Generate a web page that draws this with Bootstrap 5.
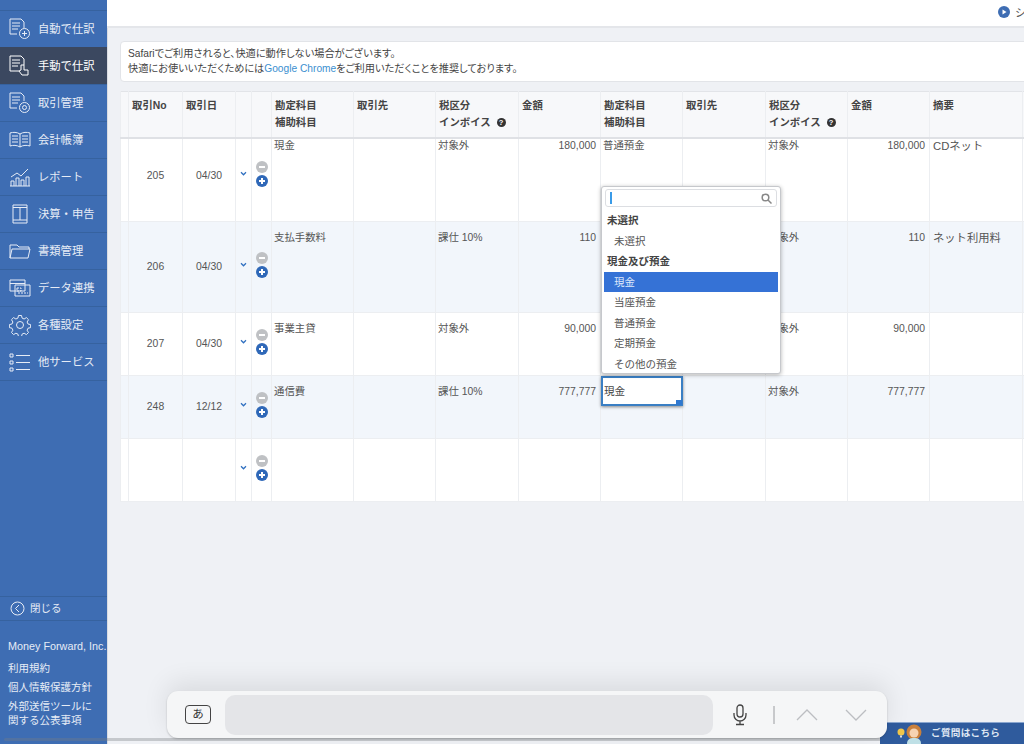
<!DOCTYPE html>
<html lang="ja">
<head>
<meta charset="utf-8">
<title>手動で仕訳</title>
<link href="https://cdn.jsdelivr.net/npm/bootstrap@5.3.0/dist/css/bootstrap.min.css" rel="stylesheet">
<style>
html,body{height:744px;overflow:hidden}
body{font-family:"Liberation Sans","Noto Sans CJK JP",sans-serif;font-size:11px;color:#555;background:#eff1f5}
.shell{height:744px;position:relative;overflow:hidden}
.side{width:107px;flex:none;background:#3e6db3;color:#e6ecf6;box-shadow:1px 0 0 #d9dce2}
.side-top{padding-top:10px}
.side-item{height:37px;padding-left:9px;gap:7px;font-size:11.3px;border-top:1px solid #36629f;white-space:nowrap;color:#e6ecf6}
.side-item:last-child{border-bottom:1px solid #36629f;height:38px}
.side-item.on{background:#3b4860;color:#fff;border-top-color:#3b4860}
.side-item svg{width:22px;height:22px;flex:none}
.side-close{height:25px;border-top:1px solid #36629f;border-bottom:1px solid #36629f;padding-left:10px;gap:5px;font-size:10.5px;margin-bottom:18px}
.side-foot{padding:0 0 17px 8px;font-size:10.5px;line-height:14px;white-space:nowrap}
.side-foot div{margin-bottom:5px}
.side-foot .mf{margin-bottom:8px;font-size:10.8px}
.wrap{min-width:0;overflow:hidden}
.topbar{height:28px;background:#fff;border-bottom:2px solid #e4e6ea;padding-left:891px;gap:5px;white-space:nowrap}
.topbar svg{width:12px;height:12px;flex:none;margin-top:-2px}
.notice{width:960px;height:41px;margin:13px 0 9px 13px;background:#fff;border:1px solid #e2e4e8;border-radius:4px;padding:5px 7px;font-size:10.2px;line-height:14.5px;color:#444;white-space:nowrap;font-feature-settings:"palt"}
.notice a{color:#3b8fd0;text-decoration:none}
.grid-box{margin-left:13px;width:960px;overflow:hidden}
.jtable{table-layout:fixed;width:930px;margin:0;border-collapse:collapse;background:#fff;font-size:10.4px;color:#555;border-top:1px solid #e2e4e8;border-left:1px solid #e6e8ec}
.jtable th,.jtable td{border:1px solid #eceef1;border-top:0;padding:0 3px;background:transparent;color:inherit;box-shadow:none;vertical-align:top;white-space:nowrap}
.jtable thead tr{height:46px;background:#f7f8fa}
.jtable th{padding:6px 3px;line-height:16.5px;font-weight:700;color:#444;border-bottom:2px solid #dfe1e5}
.rowa{height:83px}.rowb{height:91px}.rowc{height:63px}
.tint{background:#f2f6fb}
.jtable td{line-height:14px;padding-top:9px}
.jtable .rowa td{padding-top:0}
.jtable td.mid{vertical-align:middle;text-align:center;padding:0}
.jtable .rowa td.mid{padding-bottom:8px}
.jtable td.num{text-align:right;padding-right:4px}
.jtable td.big{font-size:11.3px;padding-left:3px}
.jtable td.lbl{padding-left:2px}
.jtable td.ctrl{vertical-align:middle;padding:0 0 4px;text-align:center}
.jtable .rowa td.ctrl{padding:0 0 12px}
.ctrl svg{width:12px;height:12px;display:block;margin:2px auto}
.ctrl svg.chev{width:7px;height:5px}
.q{display:inline-block;width:9px;height:9px;border-radius:50%;background:#333;color:#fff;font-size:7.5px;line-height:9px;text-align:center;margin-left:3px;vertical-align:1px}
.c0{width:8px}.c1{width:54px}.c2{width:53px}.c3{width:16px}.c4{width:20px}.c5,.c6,.c8,.c9,.c11,.c12{width:82px}.c7,.c10{width:83px}.c13{width:93px}.c14{width:28px}
.cell-edit{position:absolute;left:601px;top:376px;width:82px;height:30px;background:#fff;border:2px solid #3a7fc4;box-shadow:0 1px 3px rgba(0,0,0,.45);padding-left:1px;line-height:26px;font-size:10.6px;color:#444}
.cell-edit::after{content:"";position:absolute;right:-1px;bottom:-1px;width:6px;height:5px;background:#2f78d0}
.picker{position:absolute;left:601px;top:186px;width:180px;height:188px;overflow:hidden;background:#fff;border:1px solid #c6c8cc;border-radius:3px;box-shadow:0 1px 4px rgba(0,0,0,.3);padding:2px;font-size:10.5px;color:#555}
.pick-search{height:18px;margin:0 1px 3px;border:1px solid #dcdee2;border-radius:3px;padding:0 4px}
.caret{width:2px;height:12px;background:#3a9be8}
.pick-search svg{width:11px;height:11px}
.pick-h{height:20.5px;line-height:21px;font-weight:700;color:#444;padding-left:3px}
.pick-o{height:20.5px;line-height:20px;padding-left:10px}
.pick-o.sel{background:#3572d6;color:#dfe9fb}
.kbbar{position:absolute;left:167px;top:691px;width:720px;height:47px;background:#f5f6f7;border-radius:11px;box-shadow:0 -8px 26px rgba(0,0,0,.09),0 1px 2px rgba(0,0,0,.2);padding:4px 0}
.kana{width:26px;height:19px;margin:0 14px 0 18px;border:1.5px solid #444;border-radius:4px;font-size:11.5px;line-height:16px;text-align:center;color:#333}
.kb-input{width:488px;height:40px;background:#e4e5e8;border-radius:10px}
.kb-icons{gap:0;padding-left:18px}
.kb-icons svg{flex:none}
.gap-up{margin-left:21px}
.gap-down{margin-left:27px}
.help{position:absolute;left:880px;top:722px;width:144px;height:22px;background:#2f5b9d;border-top:1px solid #8aa6cf;border-radius:5px 0 0 0;color:#dfe7f3;font-size:9.6px;font-weight:700;letter-spacing:.3px;padding-left:16px;gap:5px;white-space:nowrap}
.scrollline{position:absolute;left:4px;top:738px;width:880px;height:3px;background:rgba(120,122,128,.35);border-radius:2px}
</style>
</head>
<body>
<div class="shell d-flex">
  <aside class="side d-flex flex-column">
    <div class="side-top">
      <div class="side-item d-flex align-items-center"><svg viewBox="0 0 22 22" fill="none" stroke="currentColor" stroke-width="1"><path d="M1 1h11l3 3v6M1 1v15h7M3 5h8M3 8h8M3 11h6"/><circle cx="15.500" cy="15.500" r="5"/><path d="M15.500 13v5M13 15.500h5"/></svg><span>自動で仕訳</span></div>
      <div class="side-item on d-flex align-items-center"><svg viewBox="0 0 22 22" fill="none" stroke="currentColor" stroke-width="1"><path d="M1 1h11l3 3v6M1 1v15h9M3 5h8M3 8h8M3 11h6"/><path d="M15 10v5h4v5h-6l-3-4 2-1v-5z" fill="#3b4860"/></svg><span>手動で仕訳</span></div>
      <div class="side-item d-flex align-items-center"><svg viewBox="0 0 22 22" fill="none" stroke="currentColor" stroke-width="1"><path d="M1 1h11l3 3v5M1 1v15h7M3 5h8M3 8h8M3 11h6"/><circle cx="15.500" cy="15.500" r="5"/><circle cx="15.500" cy="15.500" r="2"/></svg><span>取引管理</span></div>
      <div class="side-item d-flex align-items-center"><svg viewBox="0 0 22 22" fill="none" stroke="currentColor" stroke-width="1"><path d="M11 5C8 3 4 3 1 4v13c3-1 7-1 10 1 3-2 7-2 10-1V4c-3-1-7-1-10 1zM11 5v13M3 7h6M3 10h6M3 13h6M13 7h6M13 10h6M13 13h6"/></svg><span>会計帳簿</span></div>
      <div class="side-item d-flex align-items-center"><svg viewBox="0 0 22 22" fill="none" stroke="currentColor" stroke-width="1"><path d="M1 20h20M2 20v-5h3v5M7 20v-8h3v8M12 20v-6h3v6M17 20v-9h3v9M2 11l6-4 4 3 7-7"/></svg><span>レポート</span></div>
      <div class="side-item d-flex align-items-center"><svg viewBox="0 0 22 22" fill="none" stroke="currentColor" stroke-width="1"><path d="M4 2h14v18H4zM4 4.500h14M4 17h14M11 4.500V17"/></svg><span>決算・申告</span></div>
      <div class="side-item d-flex align-items-center"><svg viewBox="0 0 22 22" fill="none" stroke="currentColor" stroke-width="1"><path d="M1 18V5h7l2 2h10v2M1 18l2-9h18l-2 9z"/></svg><span>書類管理</span></div>
      <div class="side-item d-flex align-items-center"><svg viewBox="0 0 22 22" fill="none" stroke="currentColor" stroke-width="1"><path d="M1 3h15v11H1zM1 6.500h15M6 8h15v11H6z"/><path d="M8 11h4v3H8zM9 16h10" stroke-dasharray="2 1"/></svg><span>データ連携</span></div>
      <div class="side-item d-flex align-items-center"><svg viewBox="0 0 22 22" fill="none" stroke="currentColor" stroke-width="1"><path d="M9.500 1.500h3l.6 2.600 2 .9 2.300-1.400 2.100 2.100-1.400 2.300.9 2 2.600.6v3l-2.600.6-.9 2 1.400 2.300-2.100 2.100-2.300-1.400-2 .9-.6 2.600h-3l-.6-2.600-2-.9-2.300 1.400-2.100-2.100 1.400-2.300-.9-2-2.600-.6v-3l2.600-.6.9-2-1.400-2.300 2.100-2.100 2.300 1.400 2-.9z"/><circle cx="11" cy="11" r="3.500"/></svg><span>各種設定</span></div>
      <div class="side-item d-flex align-items-center"><svg viewBox="0 0 22 22" fill="none" stroke="currentColor" stroke-width="1"><path d="M1 3h3v3H1zM1 10h3v3H1zM1 17h3v3H1zM7 4.500h14M7 11.500h14M7 18.500h14"/></svg><span>他サービス</span></div>
    </div>
    <div class="mt-auto">
      <div class="side-close d-flex align-items-center"><svg width="15" height="15" viewBox="0 0 15 15" fill="none" stroke="currentColor" stroke-width="1"><circle cx="7.500" cy="7.500" r="6.500"/><path d="M9 4 5.500 7.500 9 11"/></svg><span>閉じる</span></div>
      <div class="side-foot">
        <div class="mf">Money Forward, Inc.</div>
        <div>利用規約</div>
        <div>個人情報保護方針</div>
        <div class="mb-0">外部送信ツールに<br>関する公表事項</div>
      </div>
    </div>
  </aside>
  <main class="wrap flex-grow-1">
    <div class="topbar d-flex align-items-center"><svg viewBox="0 0 12 12"><circle cx="6" cy="6" r="6" fill="#3e6db3"/><path d="M4.500 3.500 8.500 6l-4 2.500z" fill="#fff"/></svg><span>シ</span></div>
    <div class="notice">Safariでご利用されると、快適に動作しない場合がございます。<br>快適にお使いいただくためには<a href="#">Google Chrome</a>をご利用いただくことを推奨しております。</div>
    <div class="grid-box">
      <table class="table jtable">
        <colgroup><col class="c0"><col class="c1"><col class="c2"><col class="c3"><col class="c4"><col class="c5"><col class="c6"><col class="c7"><col class="c8"><col class="c9"><col class="c10"><col class="c11"><col class="c12"><col class="c13"><col class="c14"></colgroup>
        <thead>
          <tr><th></th><th>取引No</th><th>取引日</th><th></th><th></th><th>勘定科目<br>補助科目</th><th>取引先</th><th>税区分<br>インボイス <span class="q">?</span></th><th>金額</th><th>勘定科目<br>補助科目</th><th>取引先</th><th>税区分<br>インボイス <span class="q">?</span></th><th>金額</th><th>摘要</th><th></th></tr>
        </thead>
        <tbody>
          <tr class="rowa"><td></td><td class="mid">205</td><td class="mid">04/30</td><td class="ctrl"><svg class="chev" viewBox="0 0 8 6" fill="none" stroke="#2f6fc0" stroke-width="1.500"><path d="M1 1.500 4 4.500 7 1.500"/></svg></td><td class="ctrl"><svg viewBox="0 0 12 12"><circle cx="6" cy="6" r="6" fill="#bfc1c4"/><path d="M3 6h6" stroke="#fff" stroke-width="2"/></svg><svg viewBox="0 0 12 12"><circle cx="6" cy="6" r="6" fill="#2f68b8"/><path d="M3 6h6M6 3v6" stroke="#fff" stroke-width="2"/></svg></td><td class="lbl">現金</td><td></td><td class="lbl">対象外</td><td class="num">180,000</td><td class="lbl">普通預金</td><td></td><td class="lbl">対象外</td><td class="num">180,000</td><td class="big">CDネット</td><td></td></tr>
          <tr class="rowb tint"><td></td><td class="mid">206</td><td class="mid">04/30</td><td class="ctrl"><svg class="chev" viewBox="0 0 8 6" fill="none" stroke="#2f6fc0" stroke-width="1.500"><path d="M1 1.500 4 4.500 7 1.500"/></svg></td><td class="ctrl"><svg viewBox="0 0 12 12"><circle cx="6" cy="6" r="6" fill="#bfc1c4"/><path d="M3 6h6" stroke="#fff" stroke-width="2"/></svg><svg viewBox="0 0 12 12"><circle cx="6" cy="6" r="6" fill="#2f68b8"/><path d="M3 6h6M6 3v6" stroke="#fff" stroke-width="2"/></svg></td><td class="lbl">支払手数料</td><td></td><td class="lbl">課仕 10%</td><td class="num">110</td><td></td><td></td><td class="lbl">対象外</td><td class="num">110</td><td class="big">ネット利用料</td><td></td></tr>
          <tr class="rowc"><td></td><td class="mid">207</td><td class="mid">04/30</td><td class="ctrl"><svg class="chev" viewBox="0 0 8 6" fill="none" stroke="#2f6fc0" stroke-width="1.500"><path d="M1 1.500 4 4.500 7 1.500"/></svg></td><td class="ctrl"><svg viewBox="0 0 12 12"><circle cx="6" cy="6" r="6" fill="#bfc1c4"/><path d="M3 6h6" stroke="#fff" stroke-width="2"/></svg><svg viewBox="0 0 12 12"><circle cx="6" cy="6" r="6" fill="#2f68b8"/><path d="M3 6h6M6 3v6" stroke="#fff" stroke-width="2"/></svg></td><td class="lbl">事業主貸</td><td></td><td class="lbl">対象外</td><td class="num">90,000</td><td></td><td></td><td class="lbl">対象外</td><td class="num">90,000</td><td></td><td></td></tr>
          <tr class="rowc tint"><td></td><td class="mid">248</td><td class="mid">12/12</td><td class="ctrl"><svg class="chev" viewBox="0 0 8 6" fill="none" stroke="#2f6fc0" stroke-width="1.500"><path d="M1 1.500 4 4.500 7 1.500"/></svg></td><td class="ctrl"><svg viewBox="0 0 12 12"><circle cx="6" cy="6" r="6" fill="#bfc1c4"/><path d="M3 6h6" stroke="#fff" stroke-width="2"/></svg><svg viewBox="0 0 12 12"><circle cx="6" cy="6" r="6" fill="#2f68b8"/><path d="M3 6h6M6 3v6" stroke="#fff" stroke-width="2"/></svg></td><td class="lbl">通信費</td><td></td><td class="lbl">課仕 10%</td><td class="num">777,777</td><td></td><td></td><td class="lbl">対象外</td><td class="num">777,777</td><td></td><td></td></tr>
          <tr class="rowc"><td></td><td></td><td></td><td class="ctrl"><svg class="chev" viewBox="0 0 8 6" fill="none" stroke="#2f6fc0" stroke-width="1.500"><path d="M1 1.500 4 4.500 7 1.500"/></svg></td><td class="ctrl"><svg viewBox="0 0 12 12"><circle cx="6" cy="6" r="6" fill="#bfc1c4"/><path d="M3 6h6" stroke="#fff" stroke-width="2"/></svg><svg viewBox="0 0 12 12"><circle cx="6" cy="6" r="6" fill="#2f68b8"/><path d="M3 6h6M6 3v6" stroke="#fff" stroke-width="2"/></svg></td><td></td><td></td><td></td><td></td><td></td><td></td><td></td><td></td><td></td><td></td></tr>
        </tbody>
      </table>
    </div>
  </main>

  <div class="cell-edit">現金</div>
  <div class="picker">
    <div class="pick-search d-flex align-items-center justify-content-between"><span class="caret"></span><svg viewBox="0 0 11 11" fill="none" stroke="#888" stroke-width="1.500"><circle cx="4.500" cy="4.500" r="3.300"/><path d="M7 7l3.500 3.500"/></svg></div>
    <div class="pick-h">未選択</div>
    <div class="pick-o">未選択</div>
    <div class="pick-h">現金及び預金</div>
    <div class="pick-o sel">現金</div>
    <div class="pick-o">当座預金</div>
    <div class="pick-o">普通預金</div>
    <div class="pick-o">定期預金</div>
    <div class="pick-o">その他の預金</div>
  </div>

  <div class="scrollline"></div>
  <div class="help d-flex align-items-center"><svg width="30" height="21" viewBox="0 0 30 21"><circle cx="5" cy="9" r="3.500" fill="#f0c64a"/><path d="M4 12.500h2v2H4z" fill="#ddd"/><circle cx="18" cy="9" r="7.500" fill="#c9803c"/><circle cx="18" cy="10" r="4.500" fill="#f6d3b2"/><path d="M11 21c0-5 3-6 7-6s7 1 7 6z" fill="#bfe0e6"/></svg><span>ご質問はこちら</span></div>
  <div class="kbbar d-flex">
    <div class="kana align-self-center">あ</div>
    <div class="kb-input"></div>
    <div class="kb-icons d-flex align-items-center">
      <svg width="18" height="22" viewBox="0 0 18 22" fill="none" stroke="#444" stroke-width="1.300"><rect x="6" y="1" width="6" height="12" rx="3"/><path d="M3 9v2a6 6 0 0 0 12 0V9M9 17v3M5 20.500h8"/></svg>
      <svg class="ms-4" width="2" height="18" viewBox="0 0 2 18"><path d="M1 0v18" stroke="#9a9ca0" stroke-width="1"/></svg>
      <svg class="gap-up" width="22" height="12" viewBox="0 0 22 12" fill="none" stroke="#bcbec2" stroke-width="1.300"><path d="M1 11 11 1l10 10"/></svg>
      <svg class="gap-down" width="22" height="12" viewBox="0 0 22 12" fill="none" stroke="#bcbec2" stroke-width="1.300"><path d="M1 1l10 10L21 1"/></svg>
    </div>
  </div>
</div>
<script src="https://cdn.jsdelivr.net/npm/bootstrap@5.3.0/dist/js/bootstrap.bundle.min.js"></script>
</body>
</html>
